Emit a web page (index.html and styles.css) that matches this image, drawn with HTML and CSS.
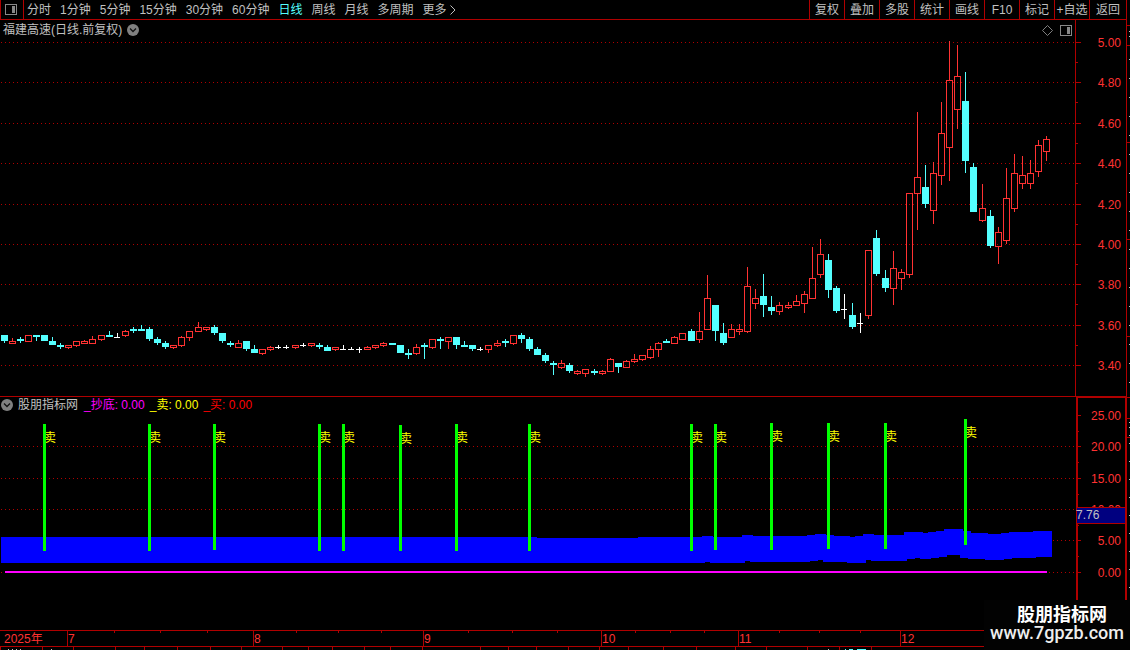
FILE: index.html
```html
<!DOCTYPE html>
<html lang="zh-CN">
<head>
    <meta charset="UTF-8">
    <meta name="viewport" content="width=device-width, initial-scale=1.0">
    <title>福建高速</title>
    <link rel="stylesheet" href="styles.css">
</head>
<body>
    <header class="toolbar">
        <button class="panel-toggle" aria-label="侧栏">
            <svg width="12" height="11" viewBox="0 0 12 11">
                <rect x="0.5" y="0.5" width="11" height="10" rx="1" fill="none" stroke="#888"/>
                <rect x="7" y="2" width="3" height="7" fill="#888"/>
            </svg>
        </button>
        <nav class="periods">
            <button>分时</button>
            <button>1分钟</button>
            <button>5分钟</button>
            <button>15分钟</button>
            <button>30分钟</button>
            <button>60分钟</button>
            <button class="active">日线</button>
            <button>周线</button>
            <button>月线</button>
            <button>多周期</button>
            <button class="more">更多
                <svg width="6" height="10" viewBox="0 0 6 10"><path d="M0.5 0.5L5 5L0.5 9.5" fill="none" stroke="#c0c0c0"/></svg>
            </button>
        </nav>
        <div class="actions">
            <button>复权</button>
            <button>叠加</button>
            <button>多股</button>
            <button>统计</button>
            <button>画线</button>
            <button>F10</button>
            <button>标记</button>
            <button>+自选</button>
            <button>返回</button>
        </div>
    </header>

    <main class="workspace">
        <div class="panes">
            <section class="pane">
                <div class="pane-header price-header">
                    <h1>福建高速(日线.前复权)</h1>
                    <button class="chevron" aria-label="展开">
                        <svg width="12" height="12" viewBox="0 0 12 12"><circle cx="6" cy="6" r="6" fill="#808080"/><path d="M3 4.5L6 7.5L9 4.5" fill="none" stroke="#111" stroke-width="1.3"/></svg>
                    </button>
                    <div class="pane-tools">
                        <svg width="11" height="11" viewBox="0 0 11 11"><path d="M5.5 0.5L10.5 5.5L5.5 10.5L0.5 5.5Z" fill="none" stroke="#808080"/></svg>
                        <svg width="12" height="11" viewBox="0 0 12 11">
                            <rect x="0.5" y="0.5" width="11" height="10" rx="1" fill="none" stroke="#888"/>
                            <rect x="7" y="2" width="3" height="7" fill="#888"/>
                        </svg>
                    </div>
                </div>
                <svg class="plot" id="pricePlot" viewBox="0 20 1075 377" preserveAspectRatio="none"></svg>
                <svg class="scale" id="priceScale" viewBox="0 20 52 377" preserveAspectRatio="none"></svg>
            </section>

            <section class="pane">
                <div class="pane-header indicator-header">
                    <button class="chevron" aria-label="展开">
                        <svg width="12" height="12" viewBox="0 0 12 12"><circle cx="6" cy="6" r="6" fill="#808080"/><path d="M3 4.5L6 7.5L9 4.5" fill="none" stroke="#111" stroke-width="1.3"/></svg>
                    </button>
                    <h2>股朋指标网</h2>
                    <span class="bottom">_抄底: 0.00</span>
                    <span class="sell">_卖: 0.00</span>
                    <span class="buy">_买: 0.00</span>
                </div>
                <svg class="plot" id="signalPlot" viewBox="0 397 1075 233" preserveAspectRatio="none"></svg>
                <svg class="scale" id="signalScale" viewBox="0 397 52 233" preserveAspectRatio="none"></svg>
            </section>
        </div>
        <svg class="side-strip" id="sideStrip" viewBox="0 20 3 610" preserveAspectRatio="none"></svg>
    </main>

    <footer class="timeline">
        <svg id="timeAxis" viewBox="0 630 1130 20" preserveAspectRatio="none"></svg>
        <div class="brand">
            <strong>股朋指标网</strong>
            <span>www.7gpzb.com</span>
        </div>
    </footer>

    <script src="script.js"></script>
</body>
</html>
```

FILE: styles.css
```css
:root {
    --line: #b00000;
    --text: #c0c0c0;
    --red: #ff3232;
    --cyan: #54ffff;
}

* {
    margin: 0;
    padding: 0;
    box-sizing: border-box;
}

body {
    display: flex;
    flex-direction: column;
    height: 100vh;
    overflow: hidden;
    background: #000;
    color: var(--text);
    font: 12px/18px "Liberation Sans", "Noto Sans CJK SC", sans-serif;
}

button {
    border: none;
    background: none;
    color: inherit;
    font: inherit;
    white-space: nowrap;
    cursor: pointer;
}

svg {
    display: block;
}

.toolbar {
    display: flex;
    flex: 0 0 20px;
    margin-right: 3px;
    border-right: 1px solid var(--line);
    border-bottom: 1px solid var(--line);
}

.panel-toggle {
    display: flex;
    align-items: center;
    width: 24px;
    padding-left: 4px;
    border-left: 1px solid var(--line);
    border-right: 1px solid var(--line);
}

.periods {
    display: flex;
    flex: 1;
    gap: 9px;
    padding-left: 3px;
}

.periods .active {
    color: var(--cyan);
}

.more {
    display: flex;
    align-items: center;
    gap: 3px;
}

.actions {
    display: flex;
}

.actions button {
    width: 35px;
    border-left: 1px solid var(--line);
}

.actions button:last-child {
    width: 37px;
}

.workspace {
    display: flex;
    flex: 1;
    min-height: 0;
}

.panes {
    display: grid;
    flex: 1;
    grid-template-rows: minmax(0, 377fr) minmax(0, 233fr);
    min-width: 0;
}

.pane {
    position: relative;
    display: grid;
    grid-template-columns: minmax(0, 1fr) 52px;
    min-height: 0;
}

.plot,
.scale {
    width: 100%;
    height: 100%;
    min-height: 0;
}

.side-strip {
    width: 3px;
    height: 100%;
}

/* header sits on top of the plot */
.pane-header {
    position: absolute;
    top: 0;
    left: 0;
    right: 52px;
    display: flex;
    align-items: center;
    gap: 5px;
    padding: 0 3px;
}

.pane-header h1,
.pane-header h2 {
    font-size: 12px;
    font-weight: normal;
}

.price-header {
    line-height: 20px;
}

.indicator-header {
    padding-left: 1px;
    line-height: 16px;
}

.indicator-header h2 {
    margin-right: 1px;
}

.pane-tools {
    display: flex;
    gap: 7px;
    margin-left: auto;
}

.bottom { color: #ff00ff; }
.sell { color: #ffff00; }
.buy { color: #ff0000; }

.timeline {
    position: relative;
    flex: 0 0 20px;
}

.timeline svg {
    width: 100%;
    height: 100%;
}

.brand {
    position: absolute;
    right: 0;
    bottom: 0;
    display: flex;
    flex-direction: column;
    align-items: center;
    width: 146px;
    height: 50px;
    padding-top: 6px;
    background: #020202;
    color: #fff;
}

.brand strong {
    padding-left: 10px;
    font-size: 18px;
    line-height: 18px;
}

.brand span {
    font: 500 18px/18px Roboto, sans-serif;
    color: #eee;
}

/* chart drawing */
rect,
line {
    shape-rendering: crispEdges;
}

.grid {
    stroke: #b00000;
    stroke-dasharray: 1 3;
}

.axis { fill: var(--line); }
.up { fill: none; stroke: var(--red); }
.up-wick { fill: var(--red); }
.down { fill: var(--cyan); }
.flat { fill: #fff; }
.band { fill: #0000ff; }
.signal { fill: #00ff00; }
.zero { fill: #ff00ff; }
.speck { fill: var(--text); }
.badge { fill: #000080; }
.badge-text { fill: var(--text); }
.label { fill: var(--red); }
.signal-text { fill: #ffff00; }
```

FILE: script.js
```js
// candles: type, wick top, body top, body bottom, wick bottom
// r = up, c = down, w = flat
const candles = `
c 335 335 341 343|r 338 341 344 344|c 337 339 341 343|r 335 335 342 342|c 335 335 337 341|c 335 335 341 341
c 337 341 345 345|c 343 345 347 349|r 345 345 348 349|r 341 341 346 347|r 340 341 344 344|r 336 339 344 344
r 335 335 340 341|c 331 335 337 337|w 333 337 338 338|r 330 331 336 337|c 327 329 331 333|c 325 329 331 331
c 327 329 339 341|c 337 339 343 345|c 341 343 347 349|r 345 345 348 349|r 336 337 346 347|r 331 331 338 341
r 322 327 332 332|r 327 327 330 331|c 325 327 333 335|c 333 333 341 343|c 341 343 345 347|r 340 343 348 348
c 341 341 349 351|c 345 349 353 353|r 349 349 354 355|r 346 347 350 351|w 345 347 348 349|w 345 347 348 349
r 345 345 348 349|w 343 345 346 347|r 343 343 346 347|c 343 345 347 349|c 345 347 351 351|r 347 347 350 351
w 345 349 350 350|w 347 349 350 350|w 347 349 350 353|r 346 347 350 350|r 345 345 348 349|r 342 343 346 347
c 343 343 345 345|c 345 345 353 353|c 349 353 355 359|r 344 347 354 355|c 343 345 347 359|r 339 339 348 349
c 337 339 341 349|r 337 337 342 349|c 337 337 345 349|c 341 345 347 347|c 345 345 349 351|w 347 349 350 351
r 345 345 350 353|r 340 343 346 347|c 339 341 343 347|r 335 335 344 345|c 333 335 339 343|c 337 339 349 351
c 347 349 355 355|c 353 355 361 363|c 361 363 365 375|r 360 363 368 369|c 363 365 371 373|r 370 371 374 375
r 369 369 374 377|c 369 371 373 375|r 370 371 374 375|r 358 359 372 372|c 363 363 367 373|r 360 361 368 368
r 354 359 362 363|r 355 355 360 361|r 346 349 358 359|r 342 343 350 357|c 339 341 343 343|r 336 337 344 344
r 333 333 340 340|c 329 331 341 341|r 312 331 340 343|r 275 298 330 330|c 305 305 331 341|c 323 333 343 345
r 324 329 338 338|r 324 329 332 335|r 267 286 332 333|r 289 298 304 309|c 274 296 305 317|c 296 307 311 315
r 302 305 312 315|r 302 305 308 309|r 295 301 306 306|r 291 294 304 313|r 247 278 299 299|r 239 254 275 278
c 254 260 290 298|c 286 288 311 313|w 294 309 310 319|c 303 315 327 329|w 313 323 324 333|r 250 250 316 319
c 230 238 274 276|c 270 278 288 292|r 251 268 289 305|r 269 272 279 290|r 193 193 275 278|r 112 177 194 230
c 165 187 204 208|r 162 173 211 224|r 102 133 176 185|r 41 80 148 181|r 45 76 110 129|c 72 101 161 173
c 163 167 212 212|r 184 208 221 222|c 210 216 246 248|r 227 232 247 264|r 168 198 241 244|r 154 173 209 212
r 156 175 184 189|r 160 173 184 189|r 140 145 172 177|r 136 139 152 161`;

const priceTicks = [[42, '5.00'], [82, '4.80'], [123, '4.60'], [163, '4.40'], [204, '4.20'], [244, '4.00'], [284, '3.80'], [325, '3.60'], [365, '3.40']];
const signalTicks = [[415, '25.00'], [446, '20.00'], [478, '15.00'], [509, '10.00'], [540, '5.00'], [572, '0.00']];

// sell signals: x, top, bottom
const signals = [
    [44, 424, 551], [149, 424, 551], [214, 424, 550], [319, 424, 551], [343, 424, 551],
    [400, 425, 551], [456, 424, 551], [529, 424, 551], [691, 424, 551], [715, 424, 550],
    [771, 423, 550], [828, 423, 549], [885, 423, 549], [965, 419, 545]
];

// band edges as steps: start x, y
const bandTop = [[1, 537], [537, 538], [638, 537], [702, 536], [713, 537], [742, 535], [753, 536], [807, 535], [815, 534], [826, 535], [834, 536], [850, 537], [855, 536], [863, 534], [874, 535], [904, 532], [923, 533], [928, 532], [936, 531], [944, 529], [963, 531], [971, 533], [988, 534], [1001, 533], [1009, 532], [1033, 531]];
const bandBottom = [[1, 563], [705, 562], [710, 563], [745, 561], [750, 562], [810, 561], [818, 560], [823, 562], [847, 563], [866, 560], [871, 561], [907, 559], [915, 558], [920, 559], [931, 558], [939, 557], [947, 555], [960, 558], [968, 559], [985, 560], [1004, 559], [1012, 558], [1036, 557]];
const bandEnd = 1052;

const months = [[67, '7'], [253, '8'], [423, '9'], [601, '10'], [738, '11'], [900, '12']];
const weeks = [114, 160, 207, 296, 338, 381, 468, 512, 557, 635, 670, 704, 779, 819, 860];

function rect(cls, x, y, w, h) {
    return `<rect class="${cls}" x="${x}" y="${y}" width="${w}" height="${h}"/>`;
}

function text(cls, x, y, value, anchor = 'start') {
    return `<text class="${cls}" x="${x}" y="${y}" text-anchor="${anchor}">${value}</text>`;
}

function gridLine(y) {
    return `<line class="grid" x1="1" y1="${y + 0.5}" x2="1075" y2="${y + 0.5}"/>`;
}

function draw(id, parts) {
    document.getElementById(id).innerHTML = parts.join('');
}

function candle(row, i) {
    const [type, ...values] = row.split(' ');
    const [high, top, bottom, low] = values.map(Number);
    const x = Math.floor(4 + i * 8 + (i + 0.45) / 12.1);
    if (type === 'r') {
        return rect('up-wick', x, high, 1, top - high) +
            rect('up', x - 2.5, top + 0.5, 6, bottom - top - 1) +
            rect('up-wick', x, bottom, 1, low - bottom);
    }
    const cls = type === 'c' ? 'down' : 'flat';
    const width = type === 'c' ? 7 : 6;
    return rect(cls, x, high, 1, low - high) + rect(cls, x - 3, top, width, bottom - top);
}

function bandPath() {
    let d = 'M1 537';
    bandTop.forEach(([x, y]) => d += `H${x}V${y}`);
    d += `H${bandEnd}`;
    for (let i = bandBottom.length - 1; i >= 0; i--) {
        d += `V${bandBottom[i][1]}H${bandBottom[i][0]}`;
    }
    return `<path class="band" d="${d}Z"/>`;
}

draw('pricePlot', [
    ...priceTicks.map(([y]) => gridLine(y)),
    ...candles.trim().split(/[\n|]/).map(candle),
    rect('axis', 0, 396, 1075, 1)
]);

const priceScale = [rect('axis', 0, 20, 1, 377), rect('axis', 51, 20, 1, 377), rect('axis', 0, 396, 52, 1)];
priceTicks.forEach(([y, value], i) => {
    priceScale.push(rect('axis', 1, y, 5, 1), text('label', 46, y + 5, value, 'end'));
    if (i < priceTicks.length - 1) {
        priceScale.push(rect('axis', 1, y + 20, 2, 1));
    }
});
draw('priceScale', priceScale);

draw('signalPlot', [
    ...signalTicks.slice(1).map(([y]) => gridLine(y)),
    bandPath(),
    rect('zero', 5, 571, 1042, 2),
    ...signals.map(([x, top, bottom]) => text('signal-text', x, top + 18, '卖') + rect('signal', x - 1, top, 3, bottom - top))
]);

const signalScale = [rect('axis', 1, 397, 2, 233), rect('axis', 50, 397, 2, 233), rect('axis', 1, 397, 51, 1)];
signalTicks.forEach(([y, value], i) => {
    signalScale.push(rect('axis', 3, y, 3, 1), text('label', 46, y + 5, value, 'end'));
    if (i < signalTicks.length - 1) {
        signalScale.push(rect('axis', 3, y + 16, 1, 1));
    }
});
signalScale.push(rect('axis', 2, 507, 48, 17), rect('badge', 2, 508, 48, 15), text('badge-text', 1, 519, '7.76'));
draw('signalScale', signalScale);

const strip = [25, 45, 142, 239, 336, 397, 418, 437].map(y => rect('axis', 0, y, 3, 1));
[31, 36, 422, 427, 435].forEach(y => strip.push(rect('speck', 2, y, 1, 1)));
for (let y = 59; y < 390; y += 19) strip.push(rect('speck', 2, y, 1, 1));
for (let y = 443; y < 600; y += 18) strip.push(rect('speck', 2, y, 1, 1));
draw('sideStrip', strip);

const time = [rect('axis', 0, 630, 1130, 1), rect('axis', 0, 646, 1130, 1), text('label', 4, 643, '2025年')];
months.forEach(([x, value]) => time.push(rect('axis', x, 630, 1, 16), text('label', x + 1, 643, value)));
weeks.forEach(x => time.push(rect('axis', x, 631, 1, 2)));
[0, 42, 73, 115, 144, 177, 210, 241, 282, 308, 332, 364, 390, 422, 480, 508, 536, 568, 599, 628, 663, 696, 735, 766, 807, 839, 871]
    .forEach(x => time.push(rect('axis', x, 647, 1, 3)));
[8, 12, 16, 20, 51, 828].forEach(x => time.push(rect('speck', x, 649, 1, 1)));
[[845, 1], [849, 4], [857, 9]].forEach(([x, w]) => time.push(rect('down', x, 649, w, 1)));
draw('timeAxis', time);
```
